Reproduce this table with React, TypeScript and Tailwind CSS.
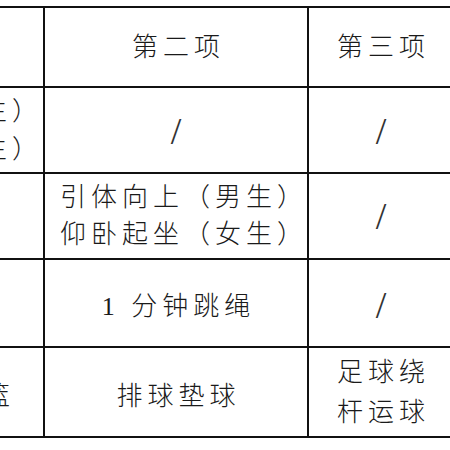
import React from "react";

const font = "font-['Liberation_Serif','Noto_Sans_CJK_SC',serif]";

function Cell({ children, className = "" }: { children?: React.ReactNode; className?: string }) {
  return (
    <div className={`bg-white flex items-center justify-center text-center text-[26px] tracking-[5px] pl-[5px] text-[#1a1a1a] font-light ${font} ${className}`}>
      {children}
    </div>
  );
}

function Slash() {
  return <span className="text-[38px] leading-none font-['Liberation_Serif',serif] font-normal tracking-normal text-[#333] -ml-[5px]">/</span>;
}

export default function App() {
  return (
    <div className="w-[450px] h-[450px] bg-white overflow-hidden pt-[6px]">
      <div className="grid grid-cols-[43px_262px_141px] grid-rows-[78px_84px_84px_86px_88px] gap-[2px] bg-[#111] border-y-2 border-[#111]">
        {/* Row 1 */}
        <div className="bg-white" />
        <Cell>第二项</Cell>
        <Cell className="pl-[8px]">第三项</Cell>

        {/* Row 2 */}
        <div className={`bg-white overflow-hidden flex flex-col items-end justify-center text-[26px] tracking-[5px] leading-[38px] text-[#1a1a1a] font-light whitespace-nowrap ${font} pt-[2px]`}>
          <div>立定跳远（男生）</div>
          <div>立定跳远（女生）</div>
        </div>
        <Cell className="pt-[2px]"><Slash /></Cell>
        <Cell className="pt-[2px] pl-[8px]"><Slash /></Cell>

        {/* Row 3 */}
        <div className="bg-white" />
        <Cell className="flex-col leading-[37px] pl-[15px]">
          <div>引体向上（男生）</div>
          <div>仰卧起坐（女生）</div>
        </Cell>
        <Cell className="pl-[8px]"><Slash /></Cell>

        {/* Row 4 */}
        <div className="bg-white" />
        <Cell className="pt-[6px] pl-[2px]">1 分钟跳绳</Cell>
        <Cell className="pt-[4px] pl-[8px]"><Slash /></Cell>

        {/* Row 5 */}
        <div className={`bg-white overflow-hidden flex items-center justify-end pr-[28px] text-[26px] tracking-[5px] text-[#1a1a1a] font-light whitespace-nowrap ${font} pt-[8px]`}>
          <div>运球投篮</div>
        </div>
        <Cell className="pt-[8px]">排球垫球</Cell>
        <Cell className="flex-col leading-[40px] pt-[2px] pl-[8px]">
          <div>足球绕</div>
          <div>杆运球</div>
        </Cell>
      </div>
    </div>
  );
}
